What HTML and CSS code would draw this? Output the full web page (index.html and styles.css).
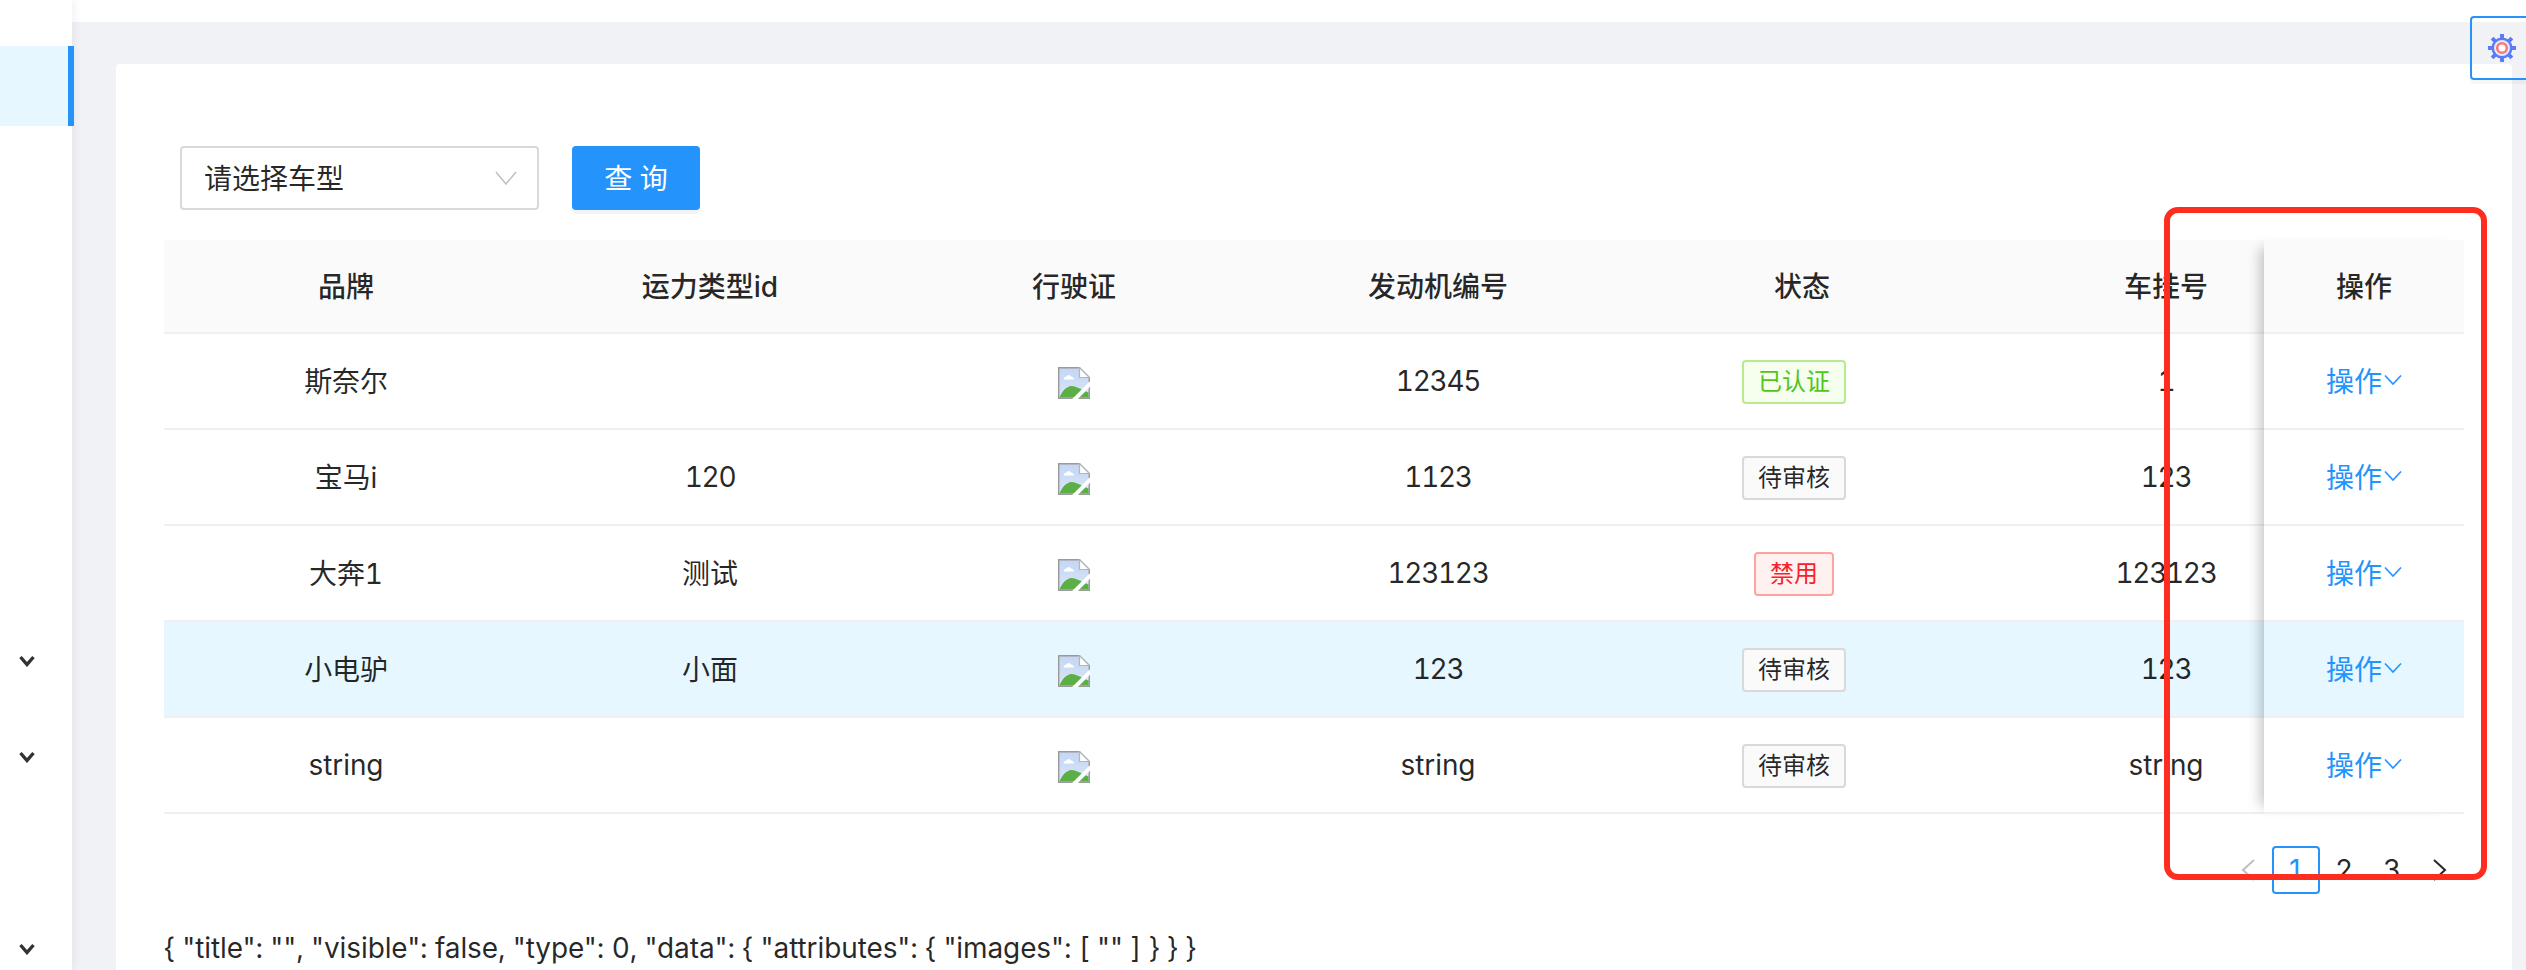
FILE: index.html
```html
<!DOCTYPE html>
<html lang="en">
<head>
    <meta charset="UTF-8">
    <meta name="viewport" content="width=device-width, initial-scale=1.0">
    <title>车辆管理</title>
    <link rel="stylesheet" href="styles.css">
</head>
<body>
    <svg class="icon-defs" width="0" height="0">
        <defs>
            <linearGradient id="pageFill" x1="0" y1="0" x2="0" y2="1">
                <stop offset="0" stop-color="#c3d6f3"/>
                <stop offset="1" stop-color="#dbe6f8"/>
            </linearGradient>
            <symbol id="brokenImg" viewBox="0 0 32 32">
                <path d="M.7.7H21.5L31.3 10.5V31.3H.7Z" fill="url(#pageFill)" stroke="#9a9a9a" stroke-width="1.4"/>
                <path d="M21.5.7V10.5H31.3Z" fill="#fff" stroke="#b5b5b5" stroke-width="1.2"/>
                <path d="M5.5 12.5C5.5 10.5 7 10 8 10C8.7 7.5 12.5 7.5 13.5 10C15 10 16 11 16 12.5Z" fill="#fff"/>
                <path d="M1.4 30.6C4 24 9 19 13.500 19C19 19 23 23 30.6 25.500V30.6Z" fill="#5cae47"/>
                <path d="M33 16L15 34" stroke="#fff" stroke-width="4"/>
            </symbol>
            <symbol id="chevDown" viewBox="0 0 18 12">
                <path d="M1 1.500L9 10L17 1.500" fill="none" stroke="currentColor" stroke-width="1.600"/>
            </symbol>
            <symbol id="chevBold" viewBox="0 0 18 12">
                <path d="M2.500 2L9 9.500L15.500 2" fill="none" stroke="currentColor" stroke-width="3.400"/>
            </symbol>
            <symbol id="chevThin" viewBox="0 0 22 14">
                <path d="M1 1L11 13L21 1" fill="none" stroke="currentColor" stroke-width="1.500"/>
            </symbol>
        </defs>
    </svg>

    <div class="layout">
        <aside class="sidebar">
            <div class="nav-active"></div>
            <div class="nav-list">
                <div class="nav-row"><svg class="nav-chev" width="18" height="12"><use href="#chevBold"/></svg></div>
                <div class="nav-row"><svg class="nav-chev" width="18" height="12"><use href="#chevBold"/></svg></div>
                <div class="nav-row"></div>
                <div class="nav-row"><svg class="nav-chev" width="18" height="12"><use href="#chevBold"/></svg></div>
            </div>
        </aside>

        <div class="main">
            <div class="topbar"></div>
            <div class="content">
                <div class="card">
                    <div class="filters">
                        <div class="select">
                            <span>请选择车型</span>
                            <svg class="select-arrow" width="22" height="14"><use href="#chevThin"/></svg>
                        </div>
                        <button class="btn-primary">查 询</button>
                    </div>

                    <div class="table-wrap">
                        <div class="table-scroll">
                            <table class="data-table">
                                <thead>
                                    <tr><th>品牌</th><th>运力类型id</th><th>行驶证</th><th>发动机编号</th><th>状态</th><th>车挂号</th></tr>
                                </thead>
                                <tbody>
                                    <tr>
                                        <td class="cn">斯奈尔</td><td></td>
                                        <td><svg class="broken" width="32" height="32"><use href="#brokenImg"/></svg></td>
                                        <td class="num">12345</td><td><span class="tag tag-green">已认证</span></td><td class="num">1</td>
                                    </tr>
                                    <tr>
                                        <td class="cn">宝马i</td><td class="num">120</td>
                                        <td><svg class="broken" width="32" height="32"><use href="#brokenImg"/></svg></td>
                                        <td class="num">1123</td><td><span class="tag">待审核</span></td><td class="num">123</td>
                                    </tr>
                                    <tr>
                                        <td class="cn">大奔1</td><td class="cn">测试</td>
                                        <td><svg class="broken" width="32" height="32"><use href="#brokenImg"/></svg></td>
                                        <td class="num">123123</td><td><span class="tag tag-red">禁用</span></td><td class="num">123123</td>
                                    </tr>
                                    <tr class="row-hover">
                                        <td class="cn">小电驴</td><td class="cn">小面</td>
                                        <td><svg class="broken" width="32" height="32"><use href="#brokenImg"/></svg></td>
                                        <td class="num">123</td><td><span class="tag">待审核</span></td><td class="num">123</td>
                                    </tr>
                                    <tr>
                                        <td>string</td><td></td>
                                        <td><svg class="broken" width="32" height="32"><use href="#brokenImg"/></svg></td>
                                        <td>string</td><td><span class="tag">待审核</span></td><td>string</td>
                                    </tr>
                                </tbody>
                            </table>
                        </div>

                        <!-- fixed right column -->
                        <table class="data-table fixed-col">
                            <thead>
                                <tr><th>操作</th></tr>
                            </thead>
                            <tbody>
                                <tr><td class="cn"><a class="action">操作<svg width="18" height="12"><use href="#chevDown"/></svg></a></td></tr>
                                <tr><td class="cn"><a class="action">操作<svg width="18" height="12"><use href="#chevDown"/></svg></a></td></tr>
                                <tr><td class="cn"><a class="action">操作<svg width="18" height="12"><use href="#chevDown"/></svg></a></td></tr>
                                <tr class="row-hover"><td class="cn"><a class="action">操作<svg width="18" height="12"><use href="#chevDown"/></svg></a></td></tr>
                                <tr><td class="cn"><a class="action">操作<svg width="18" height="12"><use href="#chevDown"/></svg></a></td></tr>
                            </tbody>
                        </table>
                    </div>

                    <div class="pagination">
                        <span class="page-item page-off">
                            <svg width="14" height="22" viewBox="0 0 14 22"><path d="M13 1L2 11L13 21" fill="none" stroke="currentColor" stroke-width="2"/></svg>
                        </span>
                        <span class="page-item page-on">1</span>
                        <span class="page-item">2</span>
                        <span class="page-item">3</span>
                        <span class="page-item">
                            <svg width="14" height="22" viewBox="0 0 14 22"><path d="M1 1L12 11L1 21" fill="none" stroke="currentColor" stroke-width="2"/></svg>
                        </span>
                    </div>

                    <div class="json-dump">{ "title": "", "visible": false, "type": 0, "data": { "attributes": { "images": [ "" ] } } }</div>
                </div>
            </div>
        </div>
    </div>

    <button class="theme-btn">
        <svg width="28" height="28" viewBox="0 0 28 28">
            <path d="M14 0V28M0 14H28M4.100 4.100L23.900 23.900M23.900 4.100L4.100 23.900" stroke="#5b7cf9" stroke-width="4"/>
            <circle cx="14" cy="14" r="10.500" fill="#5b7cf9"/>
            <circle cx="14" cy="14" r="8" fill="#e6eafb"/>
            <circle cx="14" cy="14" r="4.800" fill="#fff" stroke="#ff7875" stroke-width="2.600"/>
        </svg>
    </button>

    <!-- red annotation from the screenshot -->
    <div class="callout"></div>
</body>
</html>
```

FILE: styles.css
```css
* {
    margin: 0;
    padding: 0;
    box-sizing: border-box;
}

html, body {
    height: 100%;
    overflow: hidden;
}

body {
    position: relative;
    font-family: Inter, "Noto Sans CJK SC", sans-serif;
    font-size: 28px;
    font-variant-numeric: tabular-nums;
    color: rgba(0, 0, 0, 0.85);
    background: #f0f2f5;
}

.icon-defs {
    position: absolute;
}

.layout {
    display: flex;
    height: 100%;
}

/* sidebar */
.sidebar {
    flex: none;
    width: 72px;
    padding-top: 46px;
    background: #fff;
    box-shadow: 2px 0 8px rgba(0, 0, 0, 0.06);
    position: relative;
    z-index: 1;
}

.nav-active {
    width: 74px;
    height: 80px;
    background: #e6f7ff;
    border-right: 6px solid #2593fc;
}

.nav-list {
    margin-top: 487px;
}

.nav-row {
    height: 96px;
    display: flex;
    align-items: center;
    padding-left: 18px;
}

.nav-chev {
    color: #333;
}

/* main */
.main {
    flex: 1;
    min-width: 0;
    display: flex;
    flex-direction: column;
}

.topbar {
    flex: none;
    height: 22px;
    background: #fff;
}

.content {
    flex: 1;
    min-height: 0;
    padding: 42px 14px 0 44px;
}

.card {
    height: 100%;
    padding: 82px 48px 0;
    background: #fff;
    border-radius: 4px 4px 0 0;
}

.filters {
    display: flex;
    gap: 33px;
    margin-left: 16px;
    margin-bottom: 30px;
}

.select {
    width: 359px;
    height: 64px;
    padding: 0 20px 0 22px;
    display: flex;
    align-items: center;
    justify-content: space-between;
    border: 2px solid #d9d9d9;
    border-radius: 4px;
    background: #fff;
}

.select span {
    margin-bottom: 2px;
}

.select-arrow {
    color: #bfbfbf;
}

.btn-primary {
    width: 128px;
    height: 64px;
    padding-bottom: 2px;
    border: none;
    border-radius: 4px;
    font: inherit;
    color: #fff;
    background: #2593fc;
    box-shadow: 0 4px 0 rgba(0, 0, 0, 0.045);
}

/* table */
.table-wrap {
    position: relative;
    width: 2300px;
}

.table-scroll {
    overflow: hidden;
}

.data-table {
    width: 2184px;
    table-layout: fixed;
    border-collapse: separate;
    border-spacing: 0;
}

.data-table th {
    height: 94px;
    padding-bottom: 2px;
    font-weight: 500;
    text-align: center;
    background: #fafafa;
    border-bottom: 2px solid #f0f0f0;
}

.data-table td {
    height: 96px;
    text-align: center;
    background: #fff;
    border-bottom: 2px solid #f0f0f0;
    letter-spacing: -0.1px;
}

.data-table td.cn {
    padding-bottom: 2px;
}

.data-table td.num {
    letter-spacing: -1.3px;
}

.data-table .row-hover td {
    background: #e6f7ff;
}

.fixed-col {
    position: absolute;
    top: 0;
    right: 0;
    width: 200px;
    box-shadow: -12px 0 12px -8px rgba(0, 0, 0, 0.22);
}

.broken {
    display: inline-block;
    vertical-align: middle;
}

.tag {
    display: inline-block;
    margin-right: 16px;
    margin-top: 2px;
    padding: 0 14px;
    font-size: 24px;
    line-height: 40px;
    letter-spacing: 0;
    vertical-align: middle;
    border: 2px solid #d9d9d9;
    border-radius: 4px;
    background: #fafafa;
}

.tag-green {
    color: #52c41a;
    background: #f6ffed;
    border-color: #b7eb8f;
}

.tag-red {
    color: #f5222d;
    background: #fff1f0;
    border-color: #ffa39e;
}

.action {
    display: inline-flex;
    align-items: center;
    gap: 2px;
    letter-spacing: 0;
    color: #2593fc;
}

/* pagination */
.pagination {
    display: flex;
    justify-content: flex-end;
    margin-top: 32px;
}

.page-item {
    width: 48px;
    height: 48px;
    display: flex;
    align-items: center;
    justify-content: center;
    border-radius: 4px;
}

.page-off {
    color: #bfbfbf;
}

.page-on {
    color: #2593fc;
    border: 2px solid #2593fc;
}

.json-dump {
    margin-top: 32px;
    line-height: 44px;
    letter-spacing: -0.1px;
}

/* floating */
.theme-btn {
    position: absolute;
    top: 16px;
    right: -8px;
    width: 64px;
    height: 64px;
    display: flex;
    align-items: center;
    justify-content: center;
    background: transparent;
    border: 2px solid #2593fc;
    border-radius: 4px;
    box-shadow: 0 4px 0 rgba(0, 0, 0, 0.03);
}

.callout {
    position: absolute;
    left: 2164px;
    top: 207px;
    width: 323px;
    height: 673px;
    border: 6px solid #ff2d20;
    border-radius: 14px;
}
```
